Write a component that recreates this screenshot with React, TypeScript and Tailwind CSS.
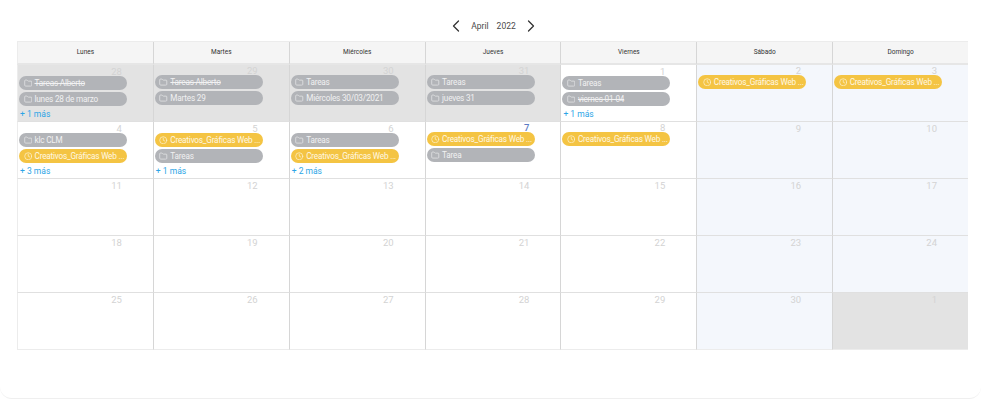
import { ChevronLeft, ChevronRight, Clock, Folder } from 'lucide-react';

type Pill = { label: string; kind: 'task' | 'event'; struck?: boolean };
type Day = { n: number; tone?: 'muted' | 'weekend'; pills?: Pill[]; more?: number; tight?: boolean; today?: boolean };

const WEB = 'Creativos_Gráficas Web ...';
const event: Pill = { label: WEB, kind: 'event' };
const task = (label: string, struck = false): Pill => ({ label, kind: 'task', struck });

const headers = ['Lunes', 'Martes', 'Miércoles', 'Jueves', 'Viernes', 'Sábado', 'Domingo'];

const days: Day[] = [
  { n: 28, tone: 'muted', pills: [task('Tareas Alberto', true), task('lunes 28 de marzo')], more: 1 },
  { n: 29, tone: 'muted', tight: true, pills: [task('Tareas Alberto', true), task('Martes 29')] },
  { n: 30, tone: 'muted', tight: true, pills: [task('Tareas'), task('Miércoles 30/03/2021')] },
  { n: 31, tone: 'muted', tight: true, pills: [task('Tareas'), task('jueves 31')] },
  { n: 1, pills: [task('Tareas'), task('viernes 01-04', true)], more: 1 },
  { n: 2, tone: 'weekend', tight: true, pills: [event] },
  { n: 3, tone: 'weekend', tight: true, pills: [event] },
  { n: 4, pills: [task('klc CLM'), event], more: 3 },
  { n: 5, pills: [event, task('Tareas')], more: 1 },
  { n: 6, pills: [task('Tareas'), event], more: 2 },
  { n: 7, today: true, tight: true, pills: [event, task('Tarea')] },
  { n: 8, tight: true, pills: [event] },
  { n: 9, tone: 'weekend' },
  { n: 10, tone: 'weekend' },
  { n: 11 }, { n: 12 }, { n: 13 }, { n: 14 }, { n: 15 },
  { n: 16, tone: 'weekend' },
  { n: 17, tone: 'weekend' },
  { n: 18 }, { n: 19 }, { n: 20 }, { n: 21 }, { n: 22 },
  { n: 23, tone: 'weekend' },
  { n: 24, tone: 'weekend' },
  { n: 25 }, { n: 26 }, { n: 27 }, { n: 28 }, { n: 29 },
  { n: 30, tone: 'weekend' },
  { n: 1, tone: 'muted' },
];

function CalendarPill({ pill }: { pill: Pill }) {
  const isEvent = pill.kind === 'event';
  return (
    <div
      className={`flex h-[14px] w-[108px] items-center gap-[2.5px] overflow-hidden rounded-full pl-[4.5px] text-[8.2px] leading-none tracking-[-0.2px] whitespace-nowrap ${
        isEvent ? 'bg-[#f4c443] text-[#fff8e4]' : 'bg-[#b2b4b8] text-[#f1f1f2]'
      }`}
    >
      {isEvent ? (
        <Clock className="h-[8.5px] w-[8.5px] shrink-0" strokeWidth={1.75} />
      ) : (
        <Folder className="h-[8.5px] w-[8.5px] shrink-0" strokeWidth={1.75} />
      )}
      <span className={pill.struck ? 'line-through' : ''}>{pill.label}</span>
    </div>
  );
}

function DayCell({ day, first, last }: { day: Day; first: boolean; last: boolean }) {
  const bg =
    day.tone === 'muted' ? 'bg-[#e3e3e3]' : day.tone === 'weekend' ? 'bg-[#f4f7fc]' : 'bg-white';
  return (
    <div
      className={`flex h-[57px] flex-col border-b border-[#e0e0e0] pl-[1px] ${bg} ${
        first ? 'border-l border-l-[#ececec]' : 'border-l border-l-[#d6d6d6]'
      } ${last ? 'border-b-[#ececec]' : ''}`}
    >
      <div
        className={`pr-[31px] text-right text-[9.5px] ${day.tight ? 'h-[10px] leading-[12px]' : 'h-[11px] leading-[13px]'} ${
          day.today ? 'font-medium text-[#5c7cc4]' : 'text-[#d3d3d3]'
        }`}
      >
        {day.n}
      </div>
      {day.pills && (
        <div className="flex flex-col gap-[2px]">
          {day.pills.map((pill, i) => (
            <CalendarPill key={i} pill={pill} />
          ))}
        </div>
      )}
      {day.more && (
        <div className="mt-[3px] pl-[1px] text-[8.5px] leading-[11px] text-[#2ba4e6]">+ {day.more} más</div>
      )}
    </div>
  );
}

export default function App() {
  return (
    <div className="h-[400px] w-[981px] overflow-hidden bg-white font-['Roboto',sans-serif]">
      <div className="h-[399px] rounded-b-[12px] border-b border-[#efefef] pt-[19px]">
        <div className="flex h-[14px] items-center justify-center pl-[6px] text-[8.5px] text-[#4a4a4a]">
          <ChevronLeft className="h-[20px] w-[20px] text-[#333333]" strokeWidth={1.5} />
          <span className="ml-[5px]">April</span>
          <span className="ml-[8px]">2022</span>
          <ChevronRight className="ml-[5px] h-[20px] w-[20px] text-[#333333]" strokeWidth={1.5} />
        </div>
        <div className="mt-[8px] ml-[17px] w-[951px]">
          <div className="grid grid-cols-7 border-t border-[#ececec] bg-[#f5f5f5]">
            {headers.map((h, i) => (
              <div
                key={h}
                className={`flex h-[23px] items-center justify-center border-b-2 border-b-[#e6e6e6] text-[6.5px] text-[#333333] ${
                  i === 0 ? 'border-l border-l-[#ececec]' : 'border-l border-l-[#d6d6d6]'
                }`}
              >
                {h}
              </div>
            ))}
          </div>
          <div className="grid grid-cols-7">
            {days.map((day, i) => (
              <DayCell key={i} day={day} first={i % 7 === 0} last={i >= 28} />
            ))}
          </div>
        </div>
      </div>
    </div>
  );
}
